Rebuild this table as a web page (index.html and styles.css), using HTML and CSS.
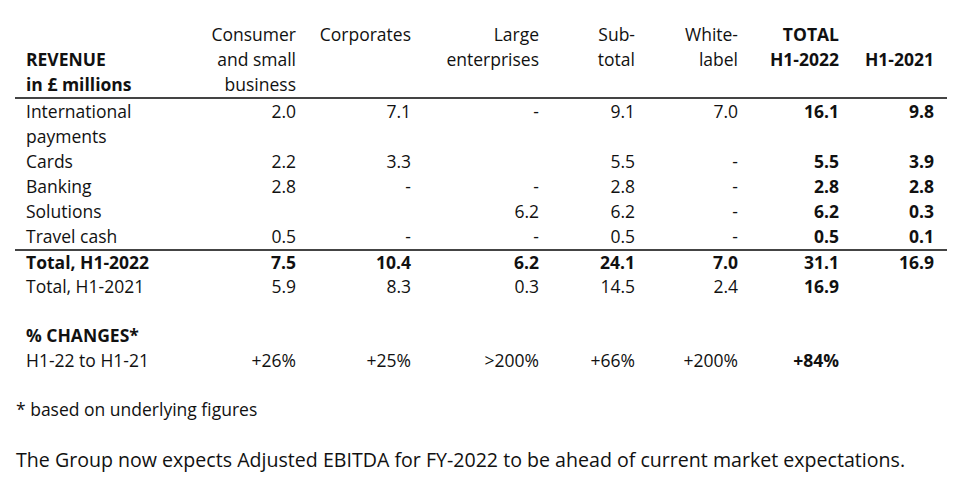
FILE: index.html
```html
<!DOCTYPE html>
<html lang="en">
<head>
<meta charset="utf-8">
<title>Revenue H1-2022</title>
<link rel="stylesheet" href="styles.css">
</head>
<body>
<table class="rev">
  <colgroup>
    <col class="c-label">
    <col class="c-cons">
    <col class="c-corp">
    <col class="c-large">
    <col class="c-sub">
    <col class="c-white">
    <col class="c-total">
    <col class="c-prev">
  </colgroup>
  <thead>
    <tr>
      <th class="label drop"><b>REVENUE<br>in £ millions</b></th>
      <th>Consumer<br>and small<br>business</th>
      <th>Corporates</th>
      <th>Large<br>enterprises</th>
      <th>Sub-<br>total</th>
      <th>White-<br>label</th>
      <th class="bold">TOTAL<br>H1-2022</th>
      <th class="bold drop last">H1-2021</th>
    </tr>
  </thead>
  <tbody>
    <tr>
      <td class="label">International<br>payments</td>
      <td>2.0</td><td>7.1</td><td>-</td><td>9.1</td><td>7.0</td><td class="bold">16.1</td><td class="bold last">9.8</td>
    </tr>
    <tr>
      <td class="label">Cards</td>
      <td>2.2</td><td>3.3</td><td></td><td>5.5</td><td>-</td><td class="bold">5.5</td><td class="bold last">3.9</td>
    </tr>
    <tr>
      <td class="label">Banking</td>
      <td>2.8</td><td>-</td><td>-</td><td>2.8</td><td>-</td><td class="bold">2.8</td><td class="bold last">2.8</td>
    </tr>
    <tr>
      <td class="label">Solutions</td>
      <td></td><td></td><td>6.2</td><td>6.2</td><td>-</td><td class="bold">6.2</td><td class="bold last">0.3</td>
    </tr>
    <tr>
      <td class="label">Travel cash</td>
      <td>0.5</td><td>-</td><td>-</td><td>0.5</td><td>-</td><td class="bold">0.5</td><td class="bold last">0.1</td>
    </tr>
    <tr class="total">
      <td class="label">Total, H1-2022</td>
      <td>7.5</td><td>10.4</td><td>6.2</td><td>24.1</td><td>7.0</td><td>31.1</td><td class="last">16.9</td>
    </tr>
    <tr>
      <td class="label">Total, H1-2021</td>
      <td>5.9</td><td>8.3</td><td>0.3</td><td>14.5</td><td>2.4</td><td class="bold">16.9</td><td class="last"></td>
    </tr>
    <tr class="spacer"><td colspan="8"></td></tr>
    <tr>
      <td class="label bold" colspan="8">% CHANGES*</td>
    </tr>
    <tr>
      <td class="label">H1-22 to H1-21</td>
      <td>+26%</td><td>+25%</td><td>&gt;200%</td><td>+66%</td><td>+200%</td><td class="bold">+84%</td><td class="last"></td>
    </tr>
  </tbody>
</table>
<p class="note">* based on underlying figures</p>
<p class="outlook">The Group now expects Adjusted EBITDA for FY-2022 to be ahead of current market expectations.</p>
</body>
</html>
```

FILE: styles.css
```css
html, body {
  margin: 0;
  padding: 0;
  background: #ffffff;
}

body {
  font-family: "Open Sans", "Noto Sans", sans-serif;
  color: #111111;
  font-size: 17.5px;
}

.rev {
  border-collapse: collapse;
  table-layout: fixed;
  width: 932px;
  margin: 22px 0 0 15px;
  line-height: 25px;
}

.c-label { width: 185px; }
.c-cons { width: 96px; }
.c-corp { width: 115px; }
.c-large { width: 128px; }
.c-sub { width: 96px; }
.c-white { width: 103px; }
.c-total { width: 101px; }
.c-prev { width: 108px; }

.rev th,
.rev td {
  padding: 0;
  text-align: right;
  vertical-align: top;
  white-space: nowrap;
  font-weight: normal;
}

.rev .label {
  text-align: left;
  padding-left: 11px;
}

.rev .last {
  padding-right: 13px;
}

.rev .drop {
  padding-top: 25px;
}

.rev thead tr {
  border-bottom: 2px solid #444444;
}

.rev .bold,
.rev .total td {
  font-weight: bold;
}

.rev .total {
  border-top: 2px solid #444444;
}

.rev .total td {
  line-height: 23px;
}

.rev .spacer td {
  height: 24px;
  line-height: 24px;
}

.note {
  margin: 24px 0 0 16px;
  line-height: 25px;
}

.outlook {
  margin: 24px 0 0 16px;
  font-size: 19.6px;
  line-height: 28px;
}
```
